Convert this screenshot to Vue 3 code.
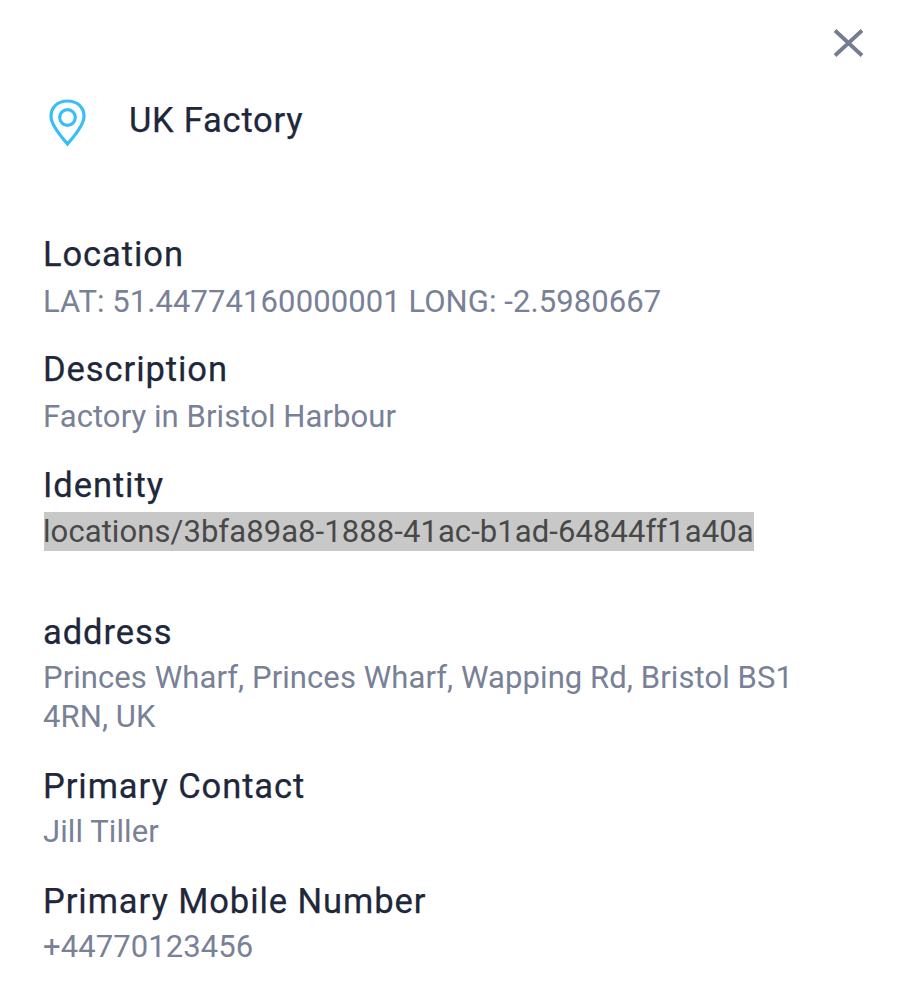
<script setup>
const groups = [
  [
    { key: 'location', label: 'Location', value: 'LAT: 51.44774160000001 LONG: -2.5980667' },
    { key: 'description', label: 'Description', value: 'Factory in Bristol Harbour' },
    { key: 'identity', label: 'Identity', value: 'locations/3bfa89a8-1888-41ac-b1ad-64844ff1a40a', selected: true },
  ],
  [
    { key: 'address', label: 'address', value: 'Princes Wharf, Princes Wharf, Wapping Rd, Bristol BS1 4RN, UK' },
    { key: 'contact', label: 'Primary Contact', value: 'Jill Tiller' },
    { key: 'mobile', label: 'Primary Mobile Number', value: '+44770123456' },
  ],
]
</script>

<template>
  <main class="panel">
    <div class="bar">
      <button class="close" aria-label="Close">
        <svg width="32" height="32" viewBox="0 0 32 32"><path d="M3 3.500 30 28.500M30 3.500 3 28.500" /></svg>
      </button>
    </div>
    <header class="head">
      <svg class="pin" width="40" height="50" viewBox="0 0 40 50">
        <path d="M19.500 47C15 41.500 3 29 3 19.500C3 10 10 4 19.500 4S36 10 36 19.500C36 29 24 41.500 19.500 47Z" />
        <circle cx="19.500" cy="20.500" r="7.800" />
      </svg>
      <h1 class="title">UK Factory</h1>
    </header>
    <dl v-for="(group, i) in groups" :key="i" class="group">
      <div v-for="f in group" :key="f.key" class="field" :class="f.key">
        <dt>{{ f.label }}</dt>
        <dd><span :class="{ selected: f.selected }">{{ f.value }}</span></dd>
      </div>
    </dl>
  </main>
</template>

<style>
body { background: #fff; }
</style>
<style scoped>
.panel { box-sizing: border-box; width: 900px; height: 998px; padding: 27px 36px 0 43px; overflow: hidden; background: #fff; font-family: Roboto, sans-serif; }
.bar { display: flex; justify-content: flex-end; height: 32px; }
.close { width: 32px; height: 32px; padding: 0; border: 0; background: none; }
.close svg { display: block; fill: none; stroke: #747c91; stroke-width: 3.8; }
.head { box-sizing: border-box; display: flex; gap: 41px; height: 175px; padding: 38px 0 0 5px; }
.pin { fill: none; stroke: #38bff7; stroke-width: 3.2; }
.title, dt { font-size: 34.5px; line-height: 40px; font-weight: 400; letter-spacing: 0.93px; color: #20273a; -webkit-text-stroke: 0.25px #20273a; white-space: nowrap; }
.title { margin: 3px 0 0; letter-spacing: 0.75px; }
.group { margin: 0 0 31px; }
.field { padding-bottom: 30px; }
dt { height: 46px; }
.location { padding-bottom: 28px; }
.location dt, .description dt { height: 48px; }
.description { padding-bottom: 29px; }
.identity dt { height: 47px; }
dd { margin: 0; width: 770px; font-size: 31px; line-height: 39px; letter-spacing: 0.08px; color: #788197; }
.selected { display: inline-block; height: 39px; margin-left: 1px; text-indent: -1px; background: #c8c8c8; color: #484848; white-space: nowrap; }
</style>
